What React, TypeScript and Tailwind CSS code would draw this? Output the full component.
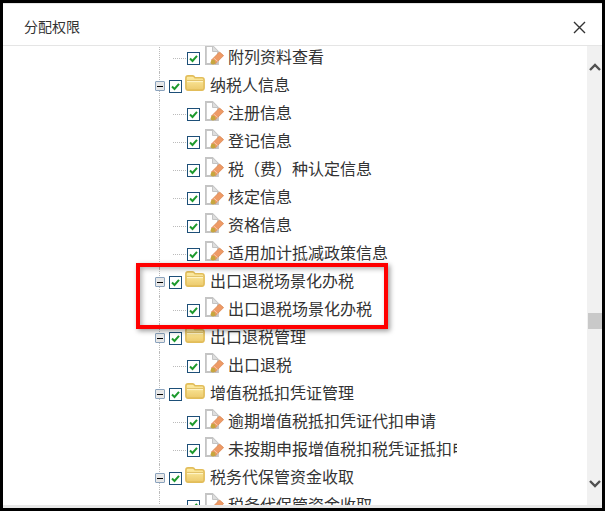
import React from "react";

const FONT = "font-['Liberation_Sans','Noto_Sans_CJK_SC',sans-serif]";

function Check() {
  return (
    <span className="flex h-[13px] w-[13px] shrink-0 items-center justify-center border border-[#1d4f78] bg-white">
      <svg width="11" height="11" viewBox="0 0 11 11">
        <path d="M2 5.5 L4.5 8 L9 2.8" fill="none" stroke="#1d9a2c" strokeWidth="2" />
      </svg>
    </span>
  );
}

function Minus() {
  return (
    <span className="flex h-[10px] w-[10px] shrink-0 items-center justify-center rounded-[1px] border border-[#8ba3bd] bg-[#e8e8e8]">
      <span className="h-px w-[6px] bg-black" />
    </span>
  );
}

function Folder() {
  return (
    <svg width="20" height="16" viewBox="0 0 20 16" className="shrink-0">
      <defs>
        <linearGradient id="fld" x1="0" y1="0" x2="0" y2="1">
          <stop offset="0" stopColor="#ffeea6" />
          <stop offset="1" stopColor="#ecca6c" />
        </linearGradient>
      </defs>
      <path
        d="M0.9 3 Q0.9 0.9 3 0.9 H7.5 Q9 0.9 9.5 2.2 L10 2.8 H17 Q19.1 2.8 19.1 5 V12.8 Q19.1 15.1 17 15.1 H3 Q0.9 15.1 0.9 12.8 Z"
        fill="url(#fld)"
        stroke="#e2bd5a"
        strokeWidth="1.6"
      />
      <path d="M1.5 5.5 H18.5" stroke="#e2c36b" />
      <path d="M2 6.6 H18" stroke="#fff6cc" />
    </svg>
  );
}

function Page() {
  return (
    <svg width="20" height="20" viewBox="0 0 20 20" className="shrink-0">
      <path d="M1.9 1 H8.5 L14 6.5 V19 H1.9 Z" fill="#fff" stroke="#c4c4c4" strokeWidth="1.8" />
      <path d="M8.5 1 V6.5 H14" fill="#dedede" stroke="#c4c4c4" />
      <path d="M7.5 15 L15.5 7 L19.6 10.6 L11.4 18.8 Z" fill="#ee9a66" stroke="#d98650" strokeWidth="0.8" />
      <path d="M9.5 12.8 L13.8 16.6" stroke="#f7c8a4" strokeWidth="1" />
      <circle cx="9" cy="17.2" r="2.4" fill="#c6a63f" />
    </svg>
  );
}

function Group({ label }: { label: string }) {
  return (
    <div className="flex h-7 items-center">
      <span className="ml-[4px] -mr-[4px] h-full w-[14px] shrink-0 border-l border-dotted border-[#bbb]" />
      <span className="-ml-[14px] flex w-[14px] shrink-0 items-center">
        <Minus />
      </span>
      <Check />
      <span className="ml-[3px] -mt-[6px]">
        <Folder />
      </span>
      <span className="ml-[5px] whitespace-nowrap">{label}</span>
    </div>
  );
}

function Leaf({ label }: { label: string }) {
  return (
    <div className="flex h-7 items-center">
      <span className="ml-[4px] flex h-full w-[28px] shrink-0 items-center border-l border-dotted border-[#bbb] pl-[13px]">
        <span className="w-[13px] border-t border-dotted border-[#bbb]" />
      </span>
      <Check />
      <span className="ml-[4px] -mt-[6px]">
        <Page />
      </span>
      <span className="ml-[4px] max-w-[229px] overflow-hidden whitespace-nowrap">{label}</span>
    </div>
  );
}

const rows: [string, boolean][] = [
  ["附列资料查看", true],
  ["纳税人信息", false],
  ["注册信息", true],
  ["登记信息", true],
  ["税（费）种认定信息", true],
  ["核定信息", true],
  ["资格信息", true],
  ["适用加计抵减政策信息", true],
  ["出口退税场景化办税", false],
  ["出口退税场景化办税", true],
  ["出口退税管理", false],
  ["出口退税", true],
  ["增值税抵扣凭证管理", false],
  ["逾期增值税抵扣凭证代扣申请", true],
  ["未按期申报增值税扣税凭证抵扣申请", true],
  ["税务代保管资金收取", false],
  ["税务代保管资金收取", true],
];

export default function App() {
  return (
    <div className={`${FONT} relative h-[511px] w-[605px] overflow-hidden border-[3px] border-black bg-white`}>
      <div className="flex h-full flex-col border-t border-[#e5e5e5]">
        <header className="flex h-[42px] shrink-0 items-center justify-between border-b border-[#e5e5e5] pl-[21px] pr-[16px] pt-[5px]">
          <span className="text-sm text-[#333]">分配权限</span>
          <svg width="13" height="13" viewBox="0 0 13 13">
            <path d="M1 1 L12 12 M12 1 L1 12" stroke="#333" strokeWidth="1.4" />
          </svg>
        </header>
        <div className="flex min-h-0 flex-1">
          <div className="min-w-0 flex-1 overflow-hidden pl-[152px] text-base text-[#333]">
            <div className="-mt-[2px]">
              {rows.map(([label, leaf], i) =>
                leaf ? <Leaf key={i} label={label} /> : <Group key={i} label={label} />
              )}
            </div>
          </div>
          <div className="flex w-[15px] shrink-0 flex-col items-center bg-[#f1f1f1] pt-[17px]">
            <svg width="12" height="9" viewBox="0 0 12 9" className="shrink-0">
              <path d="M1 7 L6 2 L11 7" fill="none" stroke="#505050" strokeWidth="2.4" />
            </svg>
            <span className="ml-px mt-[241px] h-4 w-[14px] shrink-0 bg-[#c9c9c9]" />
            <svg width="12" height="9" viewBox="0 0 12 9" className="mt-[150px] shrink-0">
              <path d="M1 2 L6 7 L11 2" fill="none" stroke="#505050" strokeWidth="2.4" />
            </svg>
          </div>
        </div>
        <div className="h-[3px] shrink-0 bg-[#e8e8e8]" />
      </div>
      <div className="absolute left-[133px] top-[260px] h-[66px] w-[252px] border-4 border-[#f00] shadow-[2px_2px_5px_rgba(0,0,0,0.4),inset_2px_2px_5px_rgba(0,0,0,0.3)]" />
    </div>
  );
}
